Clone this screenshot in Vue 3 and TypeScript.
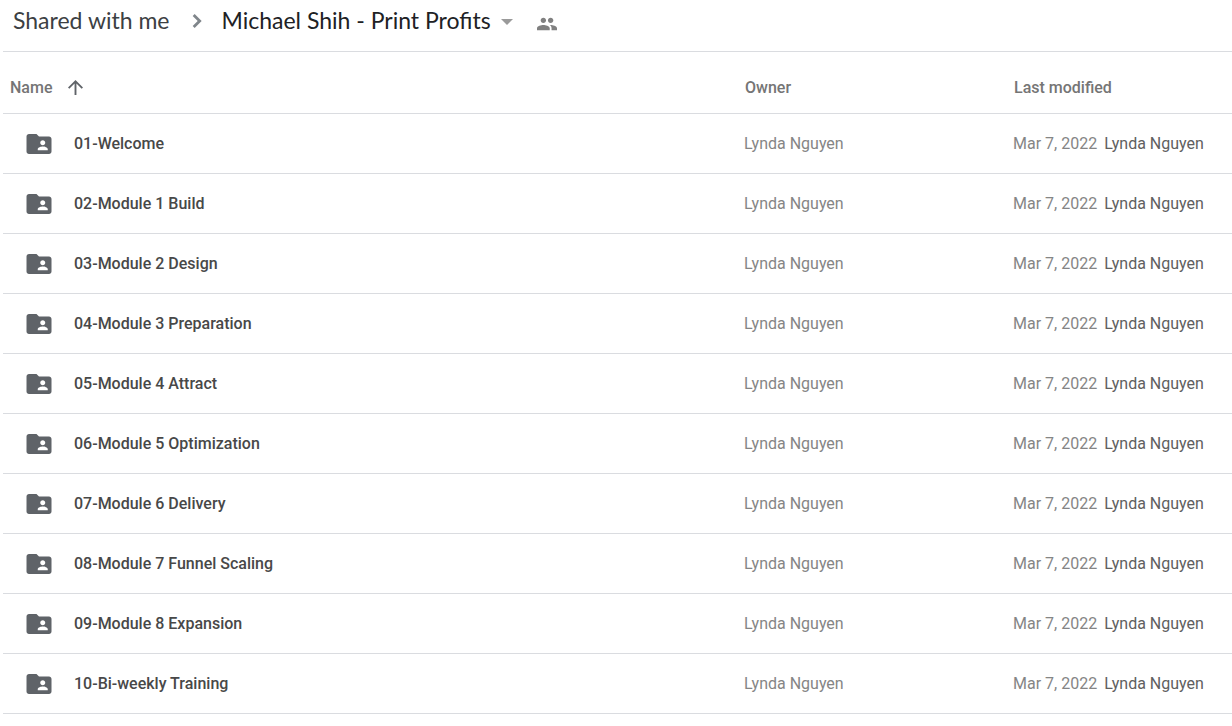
<script setup lang="ts">
interface Folder {
  name: string
  owner: string
  modified: string
  modifiedBy: string
}

const names: string[] = [
  '01-Welcome',
  '02-Module 1 Build',
  '03-Module 2 Design',
  '04-Module 3 Preparation',
  '05-Module 4 Attract',
  '06-Module 5 Optimization',
  '07-Module 6 Delivery',
  '08-Module 7 Funnel Scaling',
  '09-Module 8 Expansion',
  '10-Bi-weekly Training',
]

const folders: Folder[] = names.map((name) => ({
  name,
  owner: 'Lynda Nguyen',
  modified: 'Mar 7, 2022',
  modifiedBy: 'Lynda Nguyen',
}))
</script>

<template>
  <main class="drive">
    <nav class="crumbs" aria-label="Breadcrumb">
      <a class="crumb" href="#shared">Shared with me</a>
      <svg class="chevron" viewBox="8 6 8 12" aria-hidden="true">
        <path d="M10 6 8.300 7.700 12.600 12l-4.300 4.300L10 18l6-6z" />
      </svg>
      <button class="current" type="button" aria-haspopup="menu">
        <span>Michael Shih - Print Profits</span>
        <svg class="caret" viewBox="0 0 12 6" aria-hidden="true"><path d="M0 0h12L6 6z" /></svg>
      </button>
      <button class="people" type="button" aria-label="Manage people">
        <svg viewBox="1 5 22 14" aria-hidden="true">
          <path d="M16 11c1.66 0 2.99-1.34 2.99-3S17.66 5 16 5s-3 1.34-3 3 1.34 3 3 3zm-8 0c1.66 0 2.99-1.34 2.99-3S9.66 5 8 5 5 6.34 5 8s1.340 3 3 3zm0 2c-2.330 0-7 1.170-7 3.500V19h14v-2.500c0-2.330-4.670-3.500-7-3.500zm8 0c-.29 0-.62.020-.97.050 1.160.840 1.970 1.970 1.970 3.450V19h6v-2.500c0-2.330-4.670-3.500-7-3.500z" />
        </svg>
      </button>
    </nav>

    <table class="files">
      <colgroup>
        <col class="col-name" />
        <col class="col-owner" />
        <col class="col-modified" />
      </colgroup>
      <thead>
        <tr>
          <th scope="col" aria-sort="ascending">
            <button class="sort" type="button">
              Name
              <svg viewBox="4 4 16 16" aria-hidden="true">
                <path d="M4 12l1.410 1.410L11 7.830V20h2V7.830l5.580 5.590L20 12l-8-8z" />
              </svg>
            </button>
          </th>
          <th scope="col">Owner</th>
          <th scope="col">Last modified</th>
        </tr>
      </thead>
      <tbody>
        <tr v-for="folder in folders" :key="folder.name">
          <td>
            <div class="entry">
              <svg class="folder" viewBox="2 4 20 16" aria-hidden="true">
                <path d="M20 6h-8l-2-2H4c-1.100 0-1.990.9-1.990 2L2 18c0 1.100.9 2 2 2h16c1.100 0 2-.9 2-2V8c0-1.100-.9-2-2-2zm-5 3c1.100 0 2 .9 2 2s-.9 2-2 2-2-.9-2-2 .9-2 2-2zm4 8h-8v-1c0-1.330 2.670-2 4-2s4 .67 4 2v1z" />
              </svg>
              <span>{{ folder.name }}</span>
            </div>
          </td>
          <td class="muted">{{ folder.owner }}</td>
          <td class="muted">
            <div class="modified">
              <span>{{ folder.modified }}</span>
              <span class="by">{{ folder.modifiedBy }}</span>
            </div>
          </td>
        </tr>
      </tbody>
    </table>
  </main>
</template>

<style>
body {
  margin: 0;
  background: #fff;
}
</style>

<style scoped>
.drive {
  padding-left: 3px;
  font-family: Roboto, "Liberation Sans", sans-serif;
  font-size: 16px;
  line-height: 20px;
  color: #3c4043;
}

button {
  display: flex;
  align-items: center;
  margin: 0;
  padding: 0;
  border: 0;
  background: none;
  color: inherit;
  font: inherit;
  cursor: pointer;
}

svg {
  display: block;
  flex: none;
  fill: currentColor;
}

.crumbs {
  display: flex;
  align-items: center;
  height: 40px;
  padding: 0 10px 11px;
  border-bottom: 1px solid #dadce0;
  font-family: Lato, Roboto, sans-serif;
  font-size: 23px;
  line-height: 28px;
  white-space: nowrap;
}

.crumb {
  color: #3c4043;
  text-decoration: none;
}

.chevron {
  width: 10px;
  height: 14px;
  margin: 2px 20px 0 22px;
  color: #80868b;
}

.current {
  gap: 10px;
  color: #202124;
}

.caret {
  width: 12px;
  height: 6px;
  margin-top: 4px;
  color: #9a9a9a;
}

.people {
  margin-left: 24px;
  padding-top: 7px;
  color: #808080;
}

.people svg {
  width: 20px;
  height: 14px;
}

.files {
  width: 100%;
  border-collapse: separate;
  border-spacing: 0;
  table-layout: fixed;
}

.col-name {
  width: 740px;
}

.col-owner {
  width: 269px;
}

th,
td {
  height: 59px;
  padding: 0;
  border-bottom: 1px solid #dadce0;
  text-align: left;
  white-space: nowrap;
}

th {
  height: 51px;
  padding: 10px 0 0 2px;
  font-weight: 500;
  color: #757575;
}

th:first-child {
  padding-left: 7px;
}

.sort {
  gap: 16px;
}

.sort svg {
  width: 15px;
  height: 15px;
  color: #5f6368;
}

.entry {
  display: flex;
  align-items: center;
  gap: 22px;
  padding-left: 23px;
  font-weight: 500;
  color: #484848;
}

.folder {
  width: 26px;
  height: 20px;
  color: #5f6368;
}

.muted {
  padding-left: 1px;
  font-weight: 400;
  color: #858585;
}

.modified {
  display: flex;
  gap: 7px;
}

.by {
  color: #606060;
}
</style>
